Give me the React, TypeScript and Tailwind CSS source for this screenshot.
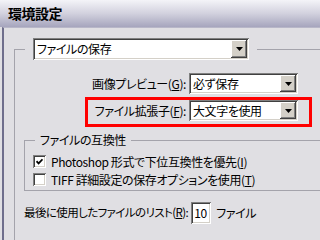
import React from 'react';

const font = "font-['Noto_Sans_CJK_JP','Noto_Sans',sans-serif] [font-feature-settings:'palt']";

const sunken =
  'shadow-[inset_1px_1px_0_#808080,inset_-1px_-1px_0_#ffffff,inset_2px_2px_0_#404040,inset_-2px_-2px_0_#d4d0c8]';

const ArrowDown = () => (
  <svg width="7" height="4" viewBox="0 0 7 4">
    <path d="M0 0h7L3.5 4z" fill="#000" />
  </svg>
);

const Combo = ({ value, className }: { value: string; className: string }) => (
  <div className={`flex items-stretch bg-white p-[2px] ${sunken} ${className}`}>
    <span className="flex flex-1 items-center pl-[2px] text-[12px] text-black">{value}</span>
    <span className="flex w-[16px] items-center justify-center bg-[#d4d0c8] shadow-[inset_-1px_-1px_0_#404040,inset_1px_1px_0_#ffffff,inset_-2px_-2px_0_#808080]">
      <ArrowDown />
    </span>
  </div>
);

const Check = ({ checked }: { checked?: boolean }) => (
  <span className={`flex h-[13px] w-[13px] shrink-0 items-center justify-center bg-white ${sunken}`}>
    {checked && (
      <svg width="7" height="7" viewBox="0 0 7 7">
        <path d="M0.5 3.2 2.6 5.4 6.5 1.3" fill="none" stroke="#000" strokeWidth="1.8" />
      </svg>
    )}
  </span>
);

const U = ({ children }: { children: React.ReactNode }) => <span className="underline">{children}</span>;

export default function App() {
  return (
    <div className={`h-[240px] w-[320px] overflow-hidden bg-[#e0dfe3] text-[12px] tracking-[-0.4px] text-black ${font}`}>
      <div className="flex h-[27px] items-center bg-gradient-to-b from-[#f4f4f8] via-[#d2d1de] to-[#a6a5bd] pl-2">
        <span className="text-[14px] font-bold tracking-[-0.5px]">環境設定</span>
      </div>
      <div className="ml-[2px] h-[213px] border-l-2 border-t border-[#6f6e8c] border-t-[#b8b7c8]">
        <fieldset className="ml-[10px] mt-[10px] h-[230px] w-[330px] border border-[#a4a3ab]">
          <legend className="ml-[10px] px-2">
            <Combo value="ファイルの保存" className="h-[22px] w-[216px]" />
          </legend>
          <div className="pt-[13px]">
            <div className="flex h-[21px] w-[283px] items-center justify-end gap-[3px]">
              <span>
                画像プレビュー(<U>G</U>):
              </span>
              <Combo value="必ず保存" className="h-[21px] w-[109px]" />
            </div>
            <div className="ml-[70px] mt-[3px] flex h-[30px] w-[227px] items-start justify-end border-[3px] border-[#ff0000] pr-[11px]">
              <div className="flex h-[21px] items-center gap-[3px]">
                <span>
                  ファイル拡張子(<U>F</U>):
                </span>
                <Combo value="大文字を使用" className="h-[21px] w-[109px]" />
              </div>
            </div>
            <fieldset className="ml-[9px] mt-[5px] w-[320px] border border-[#a4a3ab] pb-[4px]">
              <legend className="ml-[10px] px-[5px] leading-[16px]">ファイルの互換性</legend>
              <div className="flex flex-col gap-[5px] pl-2 pt-[7px]">
                <label className="flex h-[13px] items-center gap-[5px]">
                  <Check checked />
                  <span>
                    Photoshop 形式で下位互換性を優先(<U>I</U>)
                  </span>
                </label>
                <label className="flex h-[13px] items-center gap-[5px]">
                  <Check />
                  <span>
                    TIFF 詳細設定の保存オプションを使用(<U>T</U>)
                  </span>
                </label>
              </div>
            </fieldset>
            <div className="ml-[9px] mt-[11px] flex items-center">
              <span className="whitespace-nowrap text-[11.5px] tracking-[-0.6px]">
                最後に使用したファイルのリスト(<U>R</U>):
              </span>
              <span className={`ml-[3px] flex h-[22px] w-[20px] shrink-0 items-center bg-white pl-[3px] ${sunken}`}>10</span>
              <span className="ml-[5px]">ファイル</span>
            </div>
          </div>
        </fieldset>
      </div>
    </div>
  );
}
